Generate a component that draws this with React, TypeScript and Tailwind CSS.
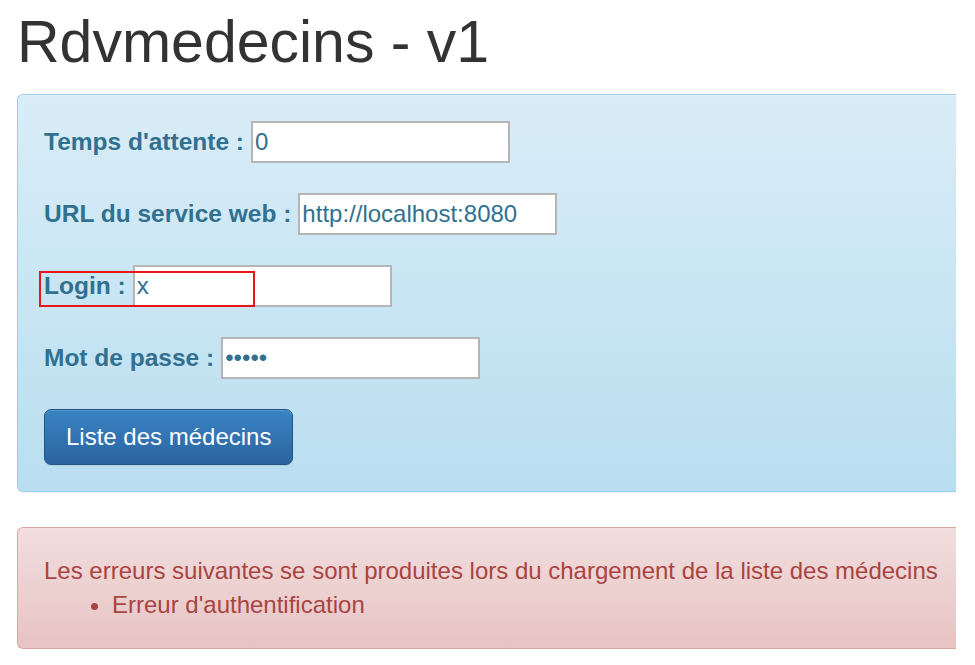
import type { ReactNode } from 'react'

const FONT = { fontFamily: '"Liberation Sans", Arial, Helvetica, sans-serif' }

function Row({ label, children }: { label: string; children: ReactNode }) {
  return (
    <div className="relative flex items-center gap-[7px]">
      <label className="text-[24.5px] font-bold leading-[34px] text-[#31708f]">{label}</label>
      {children}
    </div>
  )
}

function Field({ value, type = 'text' }: { value: string; type?: string }) {
  return (
    <input
      type={type}
      defaultValue={value}
      className="h-[42px] w-[259px] border-2 border-[#b5b5b5] bg-white px-[2px] text-[24px] text-[#31708f] outline-none"
      style={FONT}
    />
  )
}

export default function App() {
  return (
    <div className="min-h-[665px] bg-white pl-[17px] pr-[19px] text-[#333]" style={FONT}>
      <h1 className="pt-[10px] mb-[19px] text-[59px] font-normal leading-[65px] text-[#333]">
        Rdvmedecins - v1
      </h1>

      {/* Paramètres : le panneau continue au-delà du bord droit */}
      <div className="rounded-l-[6px] border border-r-0 border-[#9acfea] bg-gradient-to-b from-[#d9edf7] to-[#b9def0] py-[26px] pl-[26px] shadow-[inset_0_1px_0_rgba(255,255,255,0.25),0_1px_2px_rgba(0,0,0,0.05)]">
        <div className="flex flex-col items-start gap-[30px]">
          <Row label="Temps d'attente :">
            <Field value="0" />
          </Row>
          <Row label="URL du service web :">
            <Field value="http://localhost:8080" />
          </Row>
          <Row label="Login :">
            <Field value="x" />
            <div className="pointer-events-none absolute left-[-5px] top-[6px] h-[36px] w-[216px] border-2 border-[#e8161b]" />
          </Row>
          <Row label="Mot de passe :">
            <Field value="xxxxx" type="password" />
          </Row>
          <button
            type="button"
            className="rounded-[7px] border border-[#245580] bg-gradient-to-b from-[#3a84c3] to-[#2a64a0] px-[21px] py-[10px] text-[24px] leading-[34px] text-white shadow-[inset_0_1px_0_rgba(255,255,255,0.15),0_1px_1px_rgba(0,0,0,0.075)]"
          >
            Liste des médecins
          </button>
        </div>
      </div>

      {/* Erreurs */}
      <div className="mt-[35px] rounded-l-[6px] border border-r-0 border-[#dca7a7] bg-gradient-to-b from-[#f2dede] to-[#e7c3c3] py-[26px] pl-[26px] text-[24px] leading-[34px] text-[#a94442] whitespace-nowrap overflow-hidden">
        <p>Les erreurs suivantes se sont produites lors du chargement de la liste des médecins</p>
        <ul className="list-disc pl-[68px]">
          <li>Erreur d'authentification</li>
        </ul>
      </div>
    </div>
  )
}
